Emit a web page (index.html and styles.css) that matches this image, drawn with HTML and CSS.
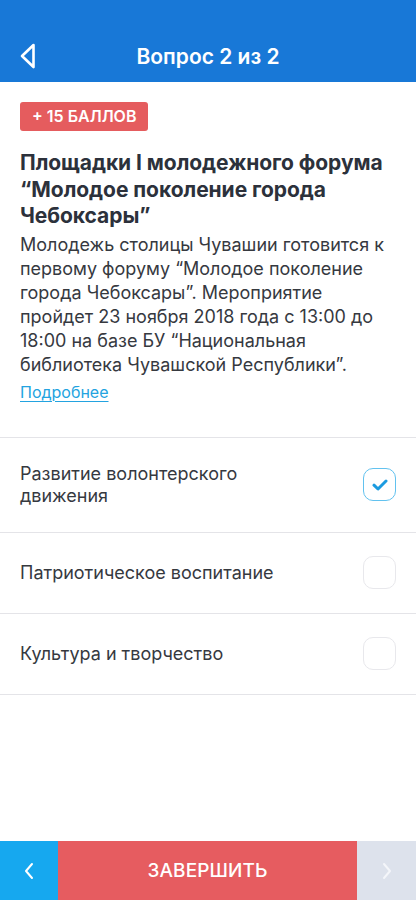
FILE: index.html
```html
<!DOCTYPE html>
<html lang="ru">
<head>
<meta charset="utf-8">
<link rel="stylesheet" href="styles.css">
</head>
<body>
<div class="app">
  <header class="topbar">
    <button class="back" aria-label="Назад">
      <svg width="16" height="26" viewBox="0 0 16 26"><path d="M13.5 2 L2 13 L13.5 24 Z" fill="none" stroke="#fff" stroke-width="2.6" stroke-linejoin="round"/></svg>
    </button>
    <h1 class="topbar-title">Вопрос 2 из 2</h1>
  </header>
  <main class="content">
    <section class="question">
      <span class="badge">+ 15 БАЛЛОВ</span>
      <h2 class="q-title">Площадки I молодежного форума “Молодое поколение города Чебоксары”</h2>
      <p class="q-text">Молодежь столицы Чувашии готовится к первому форуму “Молодое поколение города Чебоксары”. Мероприятие пройдет 23 ноября 2018 года с 13:00 до 18:00 на базе БУ “Национальная библиотека Чувашской Республики”.</p>
      <a class="more" href="#">Подробнее</a>
    </section>
    <ul class="options">
      <li class="option">
        <span class="opt-label">Развитие волонтерского<br>движения</span>
        <span class="check checked">
          <svg width="16" height="12" viewBox="0 0 16 12"><path d="M2 6.2 L6 10 L14 2" fill="none" stroke="#1b9be0" stroke-width="3" stroke-linecap="round" stroke-linejoin="round"/></svg>
        </span>
      </li>
      <li class="option">
        <span class="opt-label">Патриотическое воспитание</span>
        <span class="check"></span>
      </li>
      <li class="option">
        <span class="opt-label">Культура и творчество</span>
        <span class="check"></span>
      </li>
    </ul>
  </main>
  <footer class="bottombar">
    <button class="nav nav-prev" aria-label="Назад">
      <svg width="12" height="18" viewBox="0 0 12 18"><path d="M9 2 L3 9 L9 16" fill="none" stroke="#fff" stroke-width="2" stroke-linecap="round" stroke-linejoin="round"/></svg>
    </button>
    <button class="finish">ЗАВЕРШИТЬ</button>
    <button class="nav nav-next" aria-label="Далее">
      <svg width="12" height="18" viewBox="0 0 12 18"><path d="M3 2 L9 9 L3 16" fill="none" stroke="#f4f6fa" stroke-width="2" stroke-linecap="round" stroke-linejoin="round"/></svg>
    </button>
  </footer>
</div>
</body>
</html>
```
FILE: styles.css
```css
* { box-sizing: border-box; }
html, body { margin: 0; padding: 0; }
body {
  font-family: Inter, "Noto Sans", "DejaVu Sans", sans-serif;
  background: #fff;
  color: #2c313b;
}
.app {
  height: 900px;
  display: flex;
  flex-direction: column;
}
.topbar {
  height: 82px;
  background: #1878d7;
  display: flex;
  align-items: center;
  padding: 30px 20px 0;
}
.back {
  background: none;
  border: 0;
  padding: 0;
  width: 16px;
  height: 26px;
  display: flex;
}
.topbar-title {
  flex: 1;
  margin: 0 16px 0 0;
  text-align: center;
  color: #fff;
  font-size: 21px;
  font-weight: 600;
}
.content {
  flex: 1;
}
.question {
  padding: 20px 20px 35px;
  border-bottom: 1px solid #e4e4e8;
}
.badge {
  display: inline-block;
  height: 29px;
  line-height: 29px;
  padding: 0 12px;
  background: #e55c5e;
  color: #fff;
  border-radius: 3px;
  font-size: 16px;
  font-weight: 600;
}
.q-title {
  margin: 19px 0 3px;
  font-size: 21px;
  line-height: 26.5px;
  font-weight: 700;
  color: #2c313b;
  letter-spacing: -0.05px;
}
.q-text {
  margin: 0;
  font-size: 18px;
  line-height: 24px;
  color: #36393f;
}
.more {
  display: inline-block;
  margin-top: 5px;
  font-size: 16px;
  line-height: 20px;
  color: #23a3e0;
  text-decoration: underline;
  text-underline-offset: 3px;
  text-decoration-thickness: 1px;
}
.options {
  list-style: none;
  margin: 0;
  padding: 0;
}
.option {
  min-height: 81px;
  display: flex;
  align-items: center;
  justify-content: space-between;
  padding: 0 20px;
  border-bottom: 1px solid #e4e4e8;
}
.opt-label {
  padding: 25px 0;
  font-size: 18px;
  line-height: 22px;
  color: #36393f;
}
.check {
  width: 33px;
  height: 33px;
  border-radius: 10px;
  border: 1.5px solid #e8e8ec;
  display: flex;
  align-items: center;
  justify-content: center;
  flex: none;
}
.check.checked {
  border-color: #62c2ef;
}
.bottombar {
  height: 59px;
  display: flex;
}
.bottombar button {
  border: 0;
  padding: 0;
  margin: 0;
  font-family: inherit;
  display: flex;
  align-items: center;
  justify-content: center;
}
.nav {
  width: 58px;
}
.nav-prev { background: #16a8ef; }
.nav-next { background: #dde2ec; width: 59px; }
.finish {
  flex: 1;
  background: #e65c60;
  color: #fff;
  font-size: 19px;
  font-weight: 500;
  letter-spacing: 0.1px;
}
```
